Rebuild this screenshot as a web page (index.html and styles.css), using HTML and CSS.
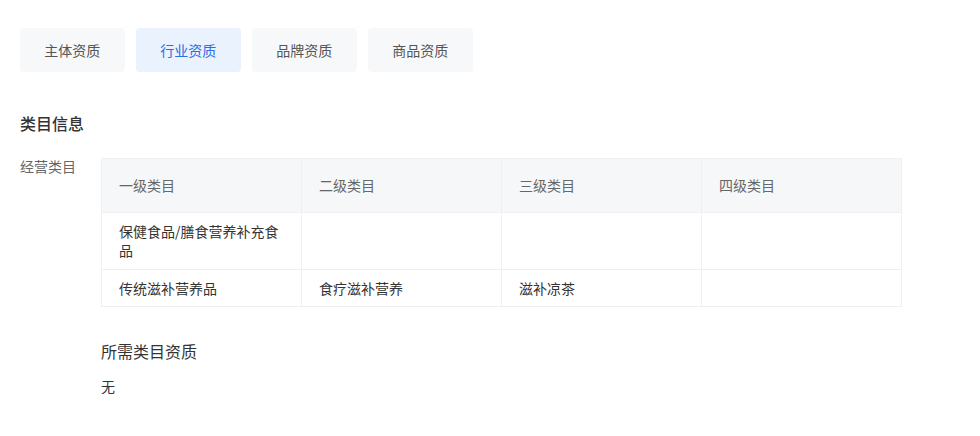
FILE: index.html
```html
<!DOCTYPE html>
<html lang="zh">
<head>
<meta charset="utf-8">
<link rel="stylesheet" href="styles.css">
</head>
<body>
<div class="page">
  <div class="tabs">
    <div class="tab">主体资质</div>
    <div class="tab active">行业资质</div>
    <div class="tab">品牌资质</div>
    <div class="tab">商品资质</div>
  </div>
  <h2 class="section-title">类目信息</h2>
  <div class="field">
    <div class="field-label">经营类目</div>
    <div class="field-body">
      <table class="cat-table">
        <thead>
          <tr><th>一级类目</th><th>二级类目</th><th>三级类目</th><th>四级类目</th></tr>
        </thead>
        <tbody>
          <tr class="tall"><td>保健食品/膳食营养补充食品</td><td></td><td></td><td></td></tr>
          <tr><td>传统滋补营养品</td><td>食疗滋补营养</td><td>滋补凉茶</td><td></td></tr>
        </tbody>
      </table>
      <div class="req-title">所需类目资质</div>
      <div class="req-value">无</div>
    </div>
  </div>
</div>
</body>
</html>
```
FILE: styles.css
```css
* { box-sizing: border-box; }
html, body { margin: 0; padding: 0; background: #fff; }
body {
  font-family: "Noto Sans CJK SC", "Noto Sans", sans-serif;
  color: #333;
  font-size: 14px;
}
.page { padding: 28px 20px 0 20px; }
.tabs { display: flex; gap: 11.5px; }
.tab {
  width: 104.5px;
  height: 44px;
  display: flex;
  align-items: center;
  justify-content: center;
  background: #f7f8fa;
  border-radius: 4px;
  color: #555;
  font-size: 14px;
}
.tab.active { background: #eaf2fe; color: #2a6ee3; }
.section-title {
  margin: 40px 0 0 0;
  font-size: 16px;
  font-weight: 500;
  line-height: 22px;
  color: #333;
}
.field { display: flex; margin-top: 24px; }
.field-label {
  width: 81px;
  flex: none;
  color: #666;
  font-size: 14px;
  line-height: 20px;
  margin-top: -2px;
}
.field-body { width: 801px; }
.cat-table {
  width: 801px;
  border-collapse: collapse;
  table-layout: fixed;
  border: 1px solid #eef0f3;
}
.cat-table th, .cat-table td {
  border: 1px solid #eef0f3;
  text-align: left;
  vertical-align: middle;
  padding: 0 17px;
  font-size: 14px;
  line-height: 19px;
}
.cat-table th {
  background: #f6f7f9;
  color: #666;
  font-weight: 400;
  height: 54px;
}
.cat-table td { color: #333; height: 37px; }
.cat-table tr.tall td { height: 57px; }
.req-title {
  margin-top: 33px;
  font-size: 16px;
  line-height: 22px;
  color: #333;
}
.req-value {
  margin-top: 14px;
  font-size: 14px;
  line-height: 20px;
  color: #333;
}
```
